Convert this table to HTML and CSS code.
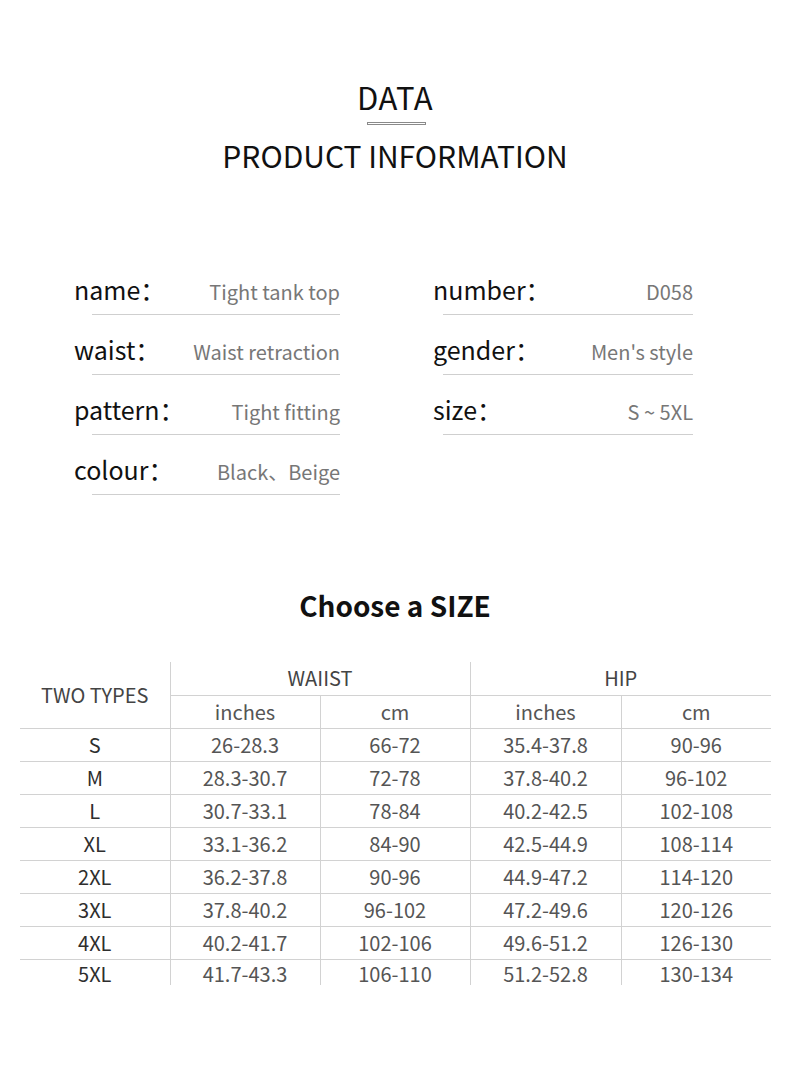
FILE: index.html
```html
<!DOCTYPE html>
<html>
<head>
<meta charset="utf-8">
<link rel="stylesheet" href="styles.css">
</head>
<body>
<div class="page">
  <header class="hero">
    <h1 class="hero-title">DATA</h1>
    <div class="hero-rule"></div>
    <h2 class="hero-sub">PRODUCT INFORMATION</h2>
  </header>

  <section class="info">
    <div class="info-col info-left">
      <div class="item"><span class="label">name：</span><span class="value">Tight tank top</span></div>
      <div class="item"><span class="label">waist：</span><span class="value">Waist retraction</span></div>
      <div class="item"><span class="label">pattern：</span><span class="value">Tight fitting</span></div>
      <div class="item"><span class="label">colour：</span><span class="value">Black、Beige</span></div>
    </div>
    <div class="info-col info-right">
      <div class="item"><span class="label">number：</span><span class="value">D058</span></div>
      <div class="item"><span class="label">gender：</span><span class="value">Men's style</span></div>
      <div class="item"><span class="label">size：</span><span class="value">S ~ 5XL</span></div>
    </div>
  </section>

  <h2 class="size-title">Choose a SIZE</h2>

  <table class="size-table">
    <colgroup>
      <col class="c1"><col class="c2"><col class="c3"><col class="c4"><col class="c5">
    </colgroup>
    <thead>
      <tr class="h1row">
        <th rowspan="2" class="types">TWO TYPES</th>
        <th colspan="2" class="grp">WAIIST</th>
        <th colspan="2" class="grp">HIP</th>
      </tr>
      <tr class="h2row">
        <th class="unit">inches</th><th class="unit">cm</th>
        <th class="unit">inches</th><th class="unit">cm</th>
      </tr>
    </thead>
    <tbody>
      <tr><td class="sz">S</td><td>26-28.3</td><td>66-72</td><td>35.4-37.8</td><td>90-96</td></tr>
      <tr><td class="sz">M</td><td>28.3-30.7</td><td>72-78</td><td>37.8-40.2</td><td>96-102</td></tr>
      <tr><td class="sz">L</td><td>30.7-33.1</td><td>78-84</td><td>40.2-42.5</td><td>102-108</td></tr>
      <tr><td class="sz">XL</td><td>33.1-36.2</td><td>84-90</td><td>42.5-44.9</td><td>108-114</td></tr>
      <tr><td class="sz">2XL</td><td>36.2-37.8</td><td>90-96</td><td>44.9-47.2</td><td>114-120</td></tr>
      <tr><td class="sz">3XL</td><td>37.8-40.2</td><td>96-102</td><td>47.2-49.6</td><td>120-126</td></tr>
      <tr><td class="sz">4XL</td><td>40.2-41.7</td><td>102-106</td><td>49.6-51.2</td><td>126-130</td></tr>
      <tr class="last"><td class="sz">5XL</td><td>41.7-43.3</td><td>106-110</td><td>51.2-52.8</td><td>130-134</td></tr>
    </tbody>
  </table>
</div>
</body>
</html>
```

FILE: styles.css
```css
* { box-sizing: border-box; }
html, body { margin: 0; padding: 0; background: #fff; }
body {
  font-family: "Noto Sans CJK SC", "Noto Sans", sans-serif;
  color: #111;
}
.page {
  width: 790px;
  height: 1087px;
  overflow: hidden;
}
.hero {
  padding-top: 78px;
  display: flex;
  flex-direction: column;
  align-items: center;
}
.hero-title {
  margin: 0;
  font-size: 31px;
  font-weight: 400;
  line-height: 38px;
  letter-spacing: 0.5px;
}
.hero-rule {
  width: 59px;
  height: 3px;
  border: 1px solid #8a8a8a;
  margin-top: 6px;
  margin-left: 2px;
}
.hero-sub {
  margin: 10px 0 0;
  font-size: 30px;
  font-weight: 400;
  line-height: 40px;
}

.info {
  display: flex;
  margin-top: 92px;
  padding-left: 74px;
  gap: 93px;
}
.info-col {
  display: flex;
  flex-direction: column;
}
.info-left { width: 266px; }
.info-right { width: 260px; }
.item {
  display: flex;
  justify-content: space-between;
  align-items: baseline;
  height: 60px;
  padding-top: 6px;
  position: relative;
}
.item::after {
  content: "";
  position: absolute;
  right: 0;
  top: 47px;
  height: 1px;
  background: #cfcfcf;
}
.info-left .item::after { left: 18px; }
.info-right .item::after { left: 10px; }
.label {
  font-size: 25px;
  color: #111;
  line-height: 32px;
}
.value {
  font-size: 20px;
  color: #777;
  line-height: 32px;
}

.size-title {
  margin: 80px 0 0;
  text-align: center;
  font-size: 28px;
  font-weight: 700;
  line-height: 36px;
  color: #111;
}

.size-table {
  margin: 39px 0 0 20px;
  width: 751px;
  border-collapse: collapse;
  table-layout: fixed;
}
.size-table col { width: 150px; }
.size-table col.c4 { width: 151px; }
.size-table th,
.size-table td {
  padding: 0;
  text-align: center;
  font-weight: 400;
  font-size: 20px;
  color: #555;
  border-bottom: 1px solid #d2d2d2;
  border-left: 1px solid #d2d2d2;
  height: 33px;
  line-height: 22px;
}
.size-table th:first-child,
.size-table td:first-child { border-left: none; }
.size-table .h2row th:first-child { border-left: 1px solid #d2d2d2; }
.size-table .types { color: #444; }
.size-table .grp { color: #444; }
.size-table .sz { color: #2e2e2e; }
.size-table .last td { border-bottom: none; height: 25px; vertical-align: top; padding-top: 3px; }
```
